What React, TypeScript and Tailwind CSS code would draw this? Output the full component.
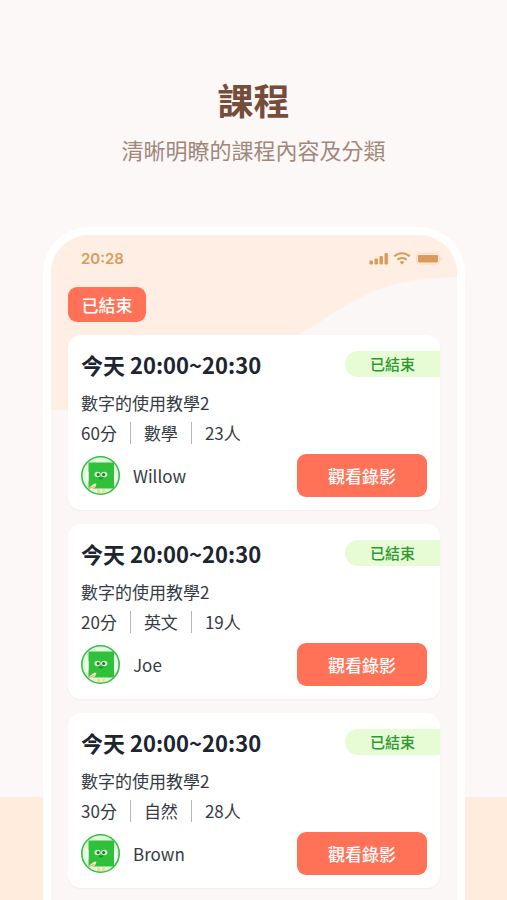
interface Course {
  id: number
  time: string
  title: string
  minutes: number
  subject: string
  students: number
  teacher: string
}

const courses: Course[] = [
  { id: 1, time: "今天 20:00~20:30", title: "數字的使用教學2", minutes: 60, subject: "數學", students: 23, teacher: "Willow" },
  { id: 2, time: "今天 20:00~20:30", title: "數字的使用教學2", minutes: 20, subject: "英文", students: 19, teacher: "Joe" },
  { id: 3, time: "今天 20:00~20:30", title: "數字的使用教學2", minutes: 30, subject: "自然", students: 28, teacher: "Brown" },
]

function StatusIcons() {
  return (
    <svg width="71" height="16" viewBox="0 0 71 16" fill="#d99b5a" className="overflow-visible" aria-hidden="true">
      {/* signal */}
      <rect x="0.5" y="9.5" width="3.4" height="4" rx="1" />
      <rect x="5.5" y="7.5" width="3.4" height="6" rx="1" />
      <rect x="10.5" y="5" width="3.4" height="8.5" rx="1" />
      <rect x="15.5" y="2" width="3.4" height="11.5" rx="1" />
      {/* wifi */}
      <g fill="none" stroke="#d99b5a" strokeWidth="2">
        <path d="M25.2 5.4a11 11 0 0 1 15.600 0" />
        <path d="M28.4 8.800a6.500 6.500 0 0 1 9.200 0" />
      </g>
      <path d="M33 13.6l-2.3-2.4a3.3 3.3 0 0 1 4.6 0z" />
      {/* battery */}
      <rect x="47.5" y="2.500" width="23" height="10.500" rx="2.500" fill="none" stroke="#f9dcc0" />
      <rect x="49" y="4" width="20" height="7.500" rx="1" />
      <path d="M71.5 6v4c1-.4 1.5-1.1 1.5-2s-.5-1.600-1.500-2z" fill="#f9dcc0" />
    </svg>
  )
}

function Avatar() {
  return (
    <svg width="40" height="40" viewBox="0 0 40 40" className="shrink-0" aria-hidden="true">
      <circle cx="19.500" cy="19.500" r="18.700" fill="#e2f8de" stroke="#36bf43" strokeWidth="1.600" />
      <rect x="7.500" y="6.500" width="25.500" height="26" fill="#2fc13a" />
      <path d="M5 14l2.500 2v9l-2.500 3zM33 16l2.500 3v7l-2.500 3z" fill="#f6fcf3" />
      <ellipse cx="16.600" cy="18.500" rx="3.200" ry="2.700" fill="#c9eec4" />
      <ellipse cx="23.200" cy="18.500" rx="3.200" ry="2.700" fill="#c9eec4" />
      <circle cx="17.200" cy="18.600" r="1.500" fill="#3c6a3c" />
      <circle cx="22.600" cy="18.600" r="1.500" fill="#3c6a3c" />
      <path d="M17.800 21.500l2.200 1.500 2.200-1.500" fill="none" stroke="#1f8a2a" strokeWidth="1.200" />
      <path d="M8 31.500l5.500-4 2 .5-1.500 3.500-4.500 2z" fill="#fdf0c8" />
      <path d="M8 32.200l5.500-1.700" stroke="#eda050" strokeWidth="1" />
      <path d="M16 33.500h3l.5 3.500h-3.500zM21 33.500h3v3.500h-3z" fill="#f8d894" />
    </svg>
  )
}

function CourseCard({ course }: { course: Course }) {
  return (
    <li className="rounded-[13px] bg-white pt-4 pb-[13px] pl-[13px] shadow-[0_1px_2px_rgba(120,90,80,0.06)]">
      <div className="flex items-start justify-between">
        <h2 className="text-[22px] leading-[26px] font-bold text-[#1c2530]">{course.time}</h2>
        <span className="flex h-[26px] w-[95px] items-center justify-center rounded-l-full bg-[#e7fbd5] text-[15px] font-medium text-[#2b9a2f]">
          已結束
        </span>
      </div>
      <p className="mt-[13px] text-[17px] leading-[26px]">{course.title}</p>
      <div className="mt-1 flex items-center gap-[13px] text-[17px] leading-[26px]">
        <span>{course.minutes}分</span>
        <span className="h-[22px] w-px bg-[#b4b7ba]" />
        <span>{course.subject}</span>
        <span className="h-[22px] w-px bg-[#b4b7ba]" />
        <span>{course.students}人</span>
      </div>
      <div className="mt-2 flex items-center gap-3 pr-[13px]">
        <Avatar />
        <span className="flex-1 text-[17px]">{course.teacher}</span>
        <button className="h-[43px] w-[130px] cursor-pointer rounded-[9px] bg-[#ff7257] text-[17px] font-medium text-white">
          觀看錄影
        </button>
      </div>
    </li>
  )
}

export default function App() {
  return (
    <div className="min-h-screen bg-[linear-gradient(to_top,#ffecdd_103px,#fcf8f7_103px)] font-['Noto_Sans_CJK_TC',sans-serif] text-[#353b43]">
      <header className="pt-[79px] pb-[62px] text-center">
        <h1 className="text-[36px] leading-10 font-bold text-[#764c3a]">課程</h1>
        <p className="mt-[14px] text-[22px] leading-8 text-[#a1877c]">清晰明瞭的課程內容及分類</p>
      </header>

      <main className="mr-[42px] ml-[43px] rounded-t-[46px] border-8 border-b-0 border-white bg-[#faf7f6]">
        <div className="relative overflow-hidden rounded-t-[38px] px-[17px] pt-3 pb-3">
          <svg
            className="absolute top-0 left-0 h-[175px] w-full"
            viewBox="0 0 406 175"
            preserveAspectRatio="none"
            aria-hidden="true"
          >
            <path
              d="M0 0H406V42C365 43 340 48 315 60C285 73 268 90 248 99C200 130 150 175 70 175H0Z"
              fill="#ffeee3"
            />
          </svg>

          <div className="relative">
            <div className="flex h-6 items-center justify-between pl-[13px]">
              <span className="font-['Inter',sans-serif] text-[15px] font-semibold text-[#d99b5a]">20:28</span>
              <StatusIcons />
            </div>
            <button className="mt-4 block h-[35px] w-[78px] cursor-pointer rounded-[9px] bg-[#ff7257] text-[17px] font-medium text-white">
              已結束
            </button>
            <ul className="mt-[13px] flex flex-col gap-[14px]">
              {courses.map((course) => (
                <CourseCard key={course.id} course={course} />
              ))}
            </ul>
          </div>
        </div>
      </main>
    </div>
  )
}
